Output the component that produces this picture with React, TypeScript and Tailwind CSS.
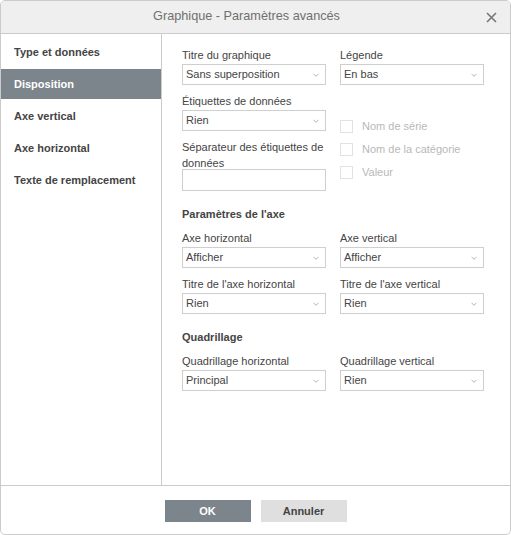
import React from 'react';

const font = { fontFamily: '"Liberation Sans", Arial, sans-serif' };

const Chevron = () => (
  <svg width="6" height="4" viewBox="0 0 6 4" className="shrink-0">
    <path d="M0.5 0.8 L3 3.3 L5.5 0.8" fill="none" stroke="#aaa" strokeWidth="0.9" />
  </svg>
);

const Select: React.FC<{ value: string }> = ({ value }) => (
  <div className="h-[21px] border border-[#cfcfcf] bg-white flex items-center justify-between pl-[3px] pr-[6px] text-[11px] text-[#444]">
    <span>{value}</span>
    <Chevron />
  </div>
);

const Field: React.FC<{ label: string; value: string }> = ({ label, value }) => (
  <div className="flex flex-col">
    <label className="text-[11px] leading-[16px] text-[#444] mb-px">{label}</label>
    <Select value={value} />
  </div>
);

const Check: React.FC<{ label: string }> = ({ label }) => (
  <div className="flex items-center gap-[9px] h-[16px]">
    <span className="w-[13px] h-[13px] border border-[#e2e2e2] bg-white" />
    <span className="text-[11px] text-[#b8b8b8]">{label}</span>
  </div>
);

const tabs = ['Type et données', 'Disposition', 'Axe vertical', 'Axe horizontal', 'Texte de remplacement'];

export default function App() {
  return (
    <div style={font} className="w-[511px] h-[535px] bg-white">
      <div className="w-full h-full border border-[#cbcbcb] rounded-[5px] flex flex-col overflow-hidden">
        {/* Header */}
        <div className="h-[33px] shrink-0 bg-[#efefef] border-b border-[#cbcbcb] flex items-center justify-center pr-[18px] relative">
          <span className="text-[12.7px] text-[#707070]">Graphique - Paramètres avancés</span>
          <svg width="11" height="11" viewBox="0 0 11 11" className="absolute right-[13px] top-[11px]">
            <path d="M1 1 L10 10 M10 1 L1 10" stroke="#777" strokeWidth="1.6" />
          </svg>
        </div>

        {/* Body */}
        <div className="flex flex-1 min-h-0">
          <div className="w-[161px] shrink-0 border-r border-[#cbcbcb] pt-[3px] flex flex-col gap-[2px]">
            {tabs.map(t => (
              <div
                key={t}
                className={`h-[30px] flex items-center pl-[13px] text-[11px] font-bold ${
                  t === 'Disposition' ? 'bg-[#7d858c] text-white' : 'text-[#444]'
                }`}
              >
                {t}
              </div>
            ))}
          </div>

          <div className="flex-1 pl-[20px] pt-[13px]">
            <div className="flex gap-[14px]">
              <div className="w-[144px] flex flex-col gap-[8px]">
                <Field label="Titre du graphique" value="Sans superposition" />
                <Field label="Étiquettes de données" value="Rien" />
                <div className="flex flex-col">
                  <label className="text-[11px] leading-[16px] text-[#444] mb-[-2px]">
                    Séparateur des étiquettes de données
                  </label>
                  <div className="h-[22px] border border-[#cfcfcf] bg-white" />
                </div>
              </div>
              <div className="w-[144px] flex flex-col">
                <Field label="Légende" value="En bas" />
                <div className="mt-[33px] flex flex-col gap-[7px]">
                  <Check label="Nom de série" />
                  <Check label="Nom de la catégorie" />
                  <Check label="Valeur" />
                </div>
              </div>
            </div>

            <div className="mt-[15px] text-[11px] leading-[16px] font-bold text-[#444]">Paramètres de l'axe</div>
            <div className="mt-[8px] grid grid-cols-[144px_144px] gap-x-[14px] gap-y-[8px]">
              <Field label="Axe horizontal" value="Afficher" />
              <Field label="Axe vertical" value="Afficher" />
              <Field label="Titre de l'axe horizontal" value="Rien" />
              <Field label="Titre de l'axe vertical" value="Rien" />
            </div>

            <div className="mt-[15px] text-[11px] leading-[16px] font-bold text-[#444]">Quadrillage</div>
            <div className="mt-[8px] grid grid-cols-[144px_144px] gap-x-[14px]">
              <Field label="Quadrillage horizontal" value="Principal" />
              <Field label="Quadrillage vertical" value="Rien" />
            </div>
          </div>
        </div>

        {/* Footer */}
        <div className="h-[49px] shrink-0 border-t border-[#cbcbcb] flex items-start justify-center gap-[10px] pt-[14px]">
          <button className="w-[86px] h-[22px] bg-[#7d858c] text-white text-[11px] font-bold">OK</button>
          <button className="w-[86px] h-[22px] bg-[#dfdfdf] text-[#444] text-[11px] font-bold">Annuler</button>
        </div>
      </div>
    </div>
  );
}
